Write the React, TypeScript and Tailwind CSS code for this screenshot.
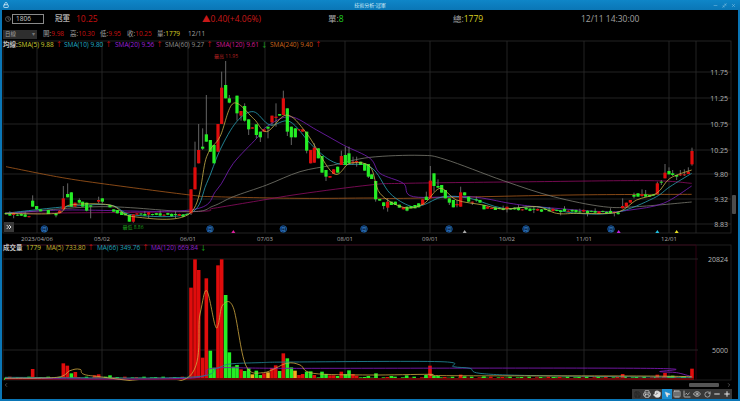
import { ChevronLeft, ChevronRight, ChevronsRight, Clock, Columns3, Eye, Hand, LineChart, Lock, Minus, Minimize2, MousePointer2, Plus, Printer, RotateCw, Save, X } from 'lucide-react';

// chart points are kept in the 3x crop space I measured from: x = z / 3, y = 50 + v / 3
type Candle = [number, number, number, number, number, number];

const R = 1110;
const RED = '#e00c0c';
const GREEN = '#25ee25';

const handCandles: Candle[] = [
  [98, 452, 470, 436, 470, 0], [110, 468, 478, 468, 478, 0], [122, 478, 484, 478, 484, 0], [145, 480, 492, 480, 492, 0],
  [168, 490, 496, 490, 502, 0], [179, 482, 490, 480, 490, 1], [190, 445, 478, 408, 478, 1], [203, 432, 442, 400, 442, 0],
  [214, 427, 470, 427, 470, 0], [225, 458, 470, 458, 470, 1], [238, 450, 458, 445, 460, 0], [248, 455, 470, 455, 470, 0],
  [260, 458, 482, 458, 484, 0], [272, 466, 470, 466, 505, 0], [296, 450, 455, 440, 460, 1], [307, 445, 455, 445, 460, 0],
  [330, 465, 472, 465, 472, 0], [341, 478, 485, 478, 485, 0], [352, 480, 490, 480, 490, 0], [365, 485, 495, 485, 495, 0],
  [376, 490, 496, 490, 496, 0], [388, 495, 515, 495, 515, 0], [400, 493, 515, 493, 518, 1], [411, 490, 494, 490, 494, 1],
  [573, 418, 490, 418, 495, 1], [585, 352, 418, 275, 418, 1], [596, 300, 340, 222, 340, 1], [608, 290, 296, 235, 300, 0],
  [619, 253, 275, 135, 275, 0], [631, 270, 305, 270, 305, 0], [642, 285, 340, 285, 340, 0], [654, 222, 305, 222, 305, 1],
  [665, 113, 222, 65, 222, 1], [677, 105, 145, 33, 145, 0], [688, 145, 158, 135, 160, 0], [711, 137, 190, 137, 212, 0],
  [723, 183, 197, 183, 212, 1], [734, 168, 212, 160, 215, 0], [746, 208, 238, 208, 255, 0], [757, 232, 236, 232, 236, 1],
  [769, 223, 255, 223, 265, 0], [781, 245, 262, 245, 276, 0], [792, 238, 245, 238, 245, 1], [804, 230, 236, 230, 265, 0],
  [816, 197, 217, 197, 228, 1], [828, 200, 204, 160, 230, 1], [839, 192, 197, 192, 197, 0], [850, 145, 195, 122, 195, 1],
  [862, 175, 245, 175, 258, 0], [874, 230, 262, 230, 285, 0], [886, 235, 262, 235, 262, 0], [897, 238, 241, 238, 241, 1],
  [908, 238, 245, 238, 245, 1], [920, 245, 302, 245, 310, 0], [932, 300, 340, 300, 340, 1], [943, 293, 338, 280, 338, 1],
  [955, 295, 325, 295, 325, 0], [966, 318, 368, 318, 368, 0], [978, 360, 380, 360, 393, 0], [990, 378, 383, 378, 383, 1],
  [1001, 358, 372, 358, 372, 1], [1013, 350, 368, 350, 368, 0], [1024, 318, 345, 302, 345, 1], [1036, 315, 345, 290, 345, 0],
  [1047, 310, 340, 290, 345, 0], [1059, 335, 339, 320, 345, 1], [1070, 333, 337, 320, 350, 1], [1082, 335, 345, 335, 345, 0],
  [1094, 340, 362, 340, 362, 0], [1105, 342, 380, 342, 384, 0],
  [R + 5, 373, 387, 373, 387, 0], [R + 17, 393, 448, 393, 455, 0], [R + 29, 447, 452, 447, 452, 0], [R + 41, 457, 468, 457, 478, 0],
  [R + 53, 455, 473, 445, 485, 1], [R + 64, 455, 465, 455, 465, 0], [R + 76, 455, 465, 455, 465, 0], [R + 88, 464, 473, 464, 473, 0],
  [R + 100, 472, 478, 472, 478, 1], [R + 111, 470, 482, 470, 484, 0], [R + 123, 468, 475, 468, 475, 0], [R + 135, 465, 475, 465, 475, 0],
  [R + 146, 460, 472, 460, 472, 0], [R + 158, 448, 465, 448, 465, 1], [R + 169, 440, 450, 425, 450, 0], [R + 181, 392, 445, 348, 445, 1],
  [R + 192, 370, 408, 370, 425, 0], [R + 204, 408, 413, 388, 413, 0], [R + 215, 405, 428, 405, 428, 0], [R + 226, 420, 445, 420, 445, 0],
  [R + 238, 445, 458, 445, 465, 0], [R + 250, 450, 472, 450, 472, 0], [R + 261, 462, 466, 450, 472, 1], [R + 272, 427, 470, 410, 470, 1],
  [R + 284, 427, 436, 427, 436, 0], [R + 296, 440, 455, 440, 455, 0], [R + 307, 455, 458, 455, 465, 1], [R + 319, 448, 451, 440, 455, 0],
  [R + 330, 450, 458, 450, 458, 0], [R + 342, 465, 478, 465, 478, 0], [R + 353, 470, 476, 470, 476, 1], [R + 365, 474, 477, 474, 477, 1],
  [R + 376, 472, 480, 472, 480, 0], [R + 758, 468, 475, 445, 475, 1], [R + 769, 458, 470, 458, 470, 1], [R + 781, 450, 458, 450, 458, 1],
  [R + 792, 435, 440, 428, 445, 0], [R + 804, 430, 440, 430, 440, 0], [R + 816, 433, 438, 418, 440, 1], [R + 827, 433, 440, 420, 440, 0],
  [R + 839, 435, 440, 435, 440, 0], [R + 850, 433, 437, 433, 437, 0], [R + 862, 400, 432, 395, 432, 1], [R + 874, 395, 398, 390, 405, 0],
  [R + 885, 368, 385, 342, 385, 1], [R + 897, 363, 373, 352, 373, 0], [R + 908, 370, 375, 360, 378, 0], [R + 920, 375, 380, 375, 390, 0],
  [R + 931, 373, 376, 360, 378, 1], [R + 943, 373, 376, 358, 378, 1], [R + 955, 365, 372, 352, 372, 1], [R + 966, 303, 343, 293, 347, 1],
];

// the quiet stretches hardly move, so fill them in from a base line instead of listing every candle
function flatCandles(from: number, to: number, startY: number, endY: number): Candle[] {
  const out: Candle[] = [];
  const count = Math.round((to - from) / 11.5);
  for (let k = 0; k <= count; k++) {
    const y = startY + ((endY - startY) * k) / Math.max(count, 1) + [0, 2, -2, 1, -1][k % 5];
    const h = 3 + (k % 3) * 2;
    out.push([from + k * 11.5, y - h / 2, y + h / 2, y - h / 2 - (k % 4 === 1 ? 8 : 1), y + h / 2 + (k % 7 === 2 ? 10 : 1), k % 4 === 2 ? 1 : 0]);
  }
  return out;
}

const candles: Candle[] = [
  ...flatCandles(18, 88, 491, 498),
  ...flatCandles(423, 562, 492, 495),
  ...flatCandles(R + 388, R + 746, 475, 488),
  ...handCandles,
];

const sma240 = [[18, 350], [170, 380], [300, 400], [570, 435], [640, 440], [900, 445], [R, 444], [R + 100, 445], [R + 600, 435], [R + 965, 433]];
const sma120 = [[15, 490], [570, 485], [640, 475], [760, 455], [900, 432], [R, 405], [R + 100, 400], [R + 500, 395], [R + 840, 392], [R + 965, 400]];
const sma60 = [[15, 492], [300, 470], [570, 485], [640, 468], [700, 440], [800, 405], [900, 365], [1000, 345], [R, 322], [R + 150, 316], [R + 225, 328], [R + 400, 392], [R + 550, 440], [R + 700, 470], [R + 800, 470], [R + 965, 456]];
const sma20 = [[15, 490], [200, 480], [570, 480], [650, 420], [700, 340], [770, 265], [800, 230], [870, 200], [950, 240], [1030, 285], [R, 325], [R + 30, 370], [R + 100, 400], [R + 130, 440], [R + 300, 440], [R + 420, 460], [R + 500, 470], [R + 700, 485], [R + 780, 480], [R + 880, 460], [R + 965, 408]];
const sma10 = [[15, 490], [200, 470], [330, 465], [400, 495], [570, 490], [620, 400], [660, 300], [710, 215], [760, 185], [810, 225], [870, 215], [940, 290], [1010, 340], [R, 350], [R + 60, 430], [R + 120, 468], [R + 160, 465], [R + 220, 440], [R + 300, 445], [R + 400, 475], [R + 500, 470], [R + 620, 490], [R + 740, 487], [R + 850, 445], [R + 900, 410], [R + 965, 370]];
const sma5 = [[15, 490], [170, 490], [210, 465], [330, 465], [400, 500], [570, 490], [620, 320], [660, 260], [700, 160], [760, 205], [800, 245], [860, 195], [920, 250], [1000, 370], [1050, 340], [R, 350], [R + 30, 430], [R + 100, 472], [R + 160, 462], [R + 210, 415], [R + 260, 450], [R + 340, 465], [R + 400, 477], [R + 500, 470], [R + 560, 490], [R + 620, 490], [R + 740, 487], [R + 800, 450], [R + 860, 430], [R + 900, 385], [R + 965, 360]];

const gridX = [37, 102, 188, 265, 345, 430, 507, 584, 669];
const dates = ['2023/04/06', '05/02', '06/01', '07/03', '08/01', '09/01', '10/02', '11/01', '12/01'];
const prices: [string, number][] = [['11.75', 72], ['11.25', 98], ['10.75', 124], ['10.25', 150], ['9.80', 174], ['9.32', 199], ['8.83', 224]];
const monthMarks = [133, 630, 850, 1092, R + 237, R + 468, R + 723];
const triangles: [number, string][] = [[700, '#e020a0'], [R + 284, '#aaaaaa'], [R + 746, '#c020e0'], [R + 862, '#20c0e0'], [R + 920, '#e8e020']];

// catmull-rom through the measured points, the averages are curves and not zigzags
function smooth(pts: number[][], base: number) {
  const p = pts.map(([z, v]) => [z / 3, base + v / 3]);
  let d = `M${p[0][0]} ${p[0][1]}`;
  for (let i = 0; i < p.length - 1; i++) {
    const a = p[Math.max(i - 1, 0)];
    const b = p[i];
    const c = p[i + 1];
    const e = p[Math.min(i + 2, p.length - 1)];
    const c1x = b[0] + (c[0] - a[0]) / 6;
    const c1y = b[1] + (c[1] - a[1]) / 6;
    const c2x = c[0] - (e[0] - b[0]) / 6;
    const c2y = c[1] - (e[1] - b[1]) / 6;
    d += ` C${c1x} ${c1y} ${c2x} ${c2y} ${c[0]} ${c[1]}`;
  }
  return d;
}

// volume: [z, top, colour] with 0 green, 1 red, 2 amber
const handBars: number[][] = [
  [98, 387, 1], [190, 370, 1], [202, 377, 1], [214, 400, 0], [226, 396, 1], [284, 406, 1], [296, 403, 1], [330, 406, 0],
  [573, 143, 1], [585, 58, 1], [596, 90, 1], [608, 353, 1], [619, 115, 1], [631, 332, 0], [642, 383, 0], [654, 76, 1],
  [665, 58, 1], [677, 165, 0], [688, 337, 0], [700, 380, 0], [711, 375, 0], [723, 388, 1], [734, 393, 0], [746, 385, 0],
  [757, 403, 2], [769, 392, 0], [781, 405, 0], [792, 400, 1], [804, 397, 2], [816, 384, 1], [827, 376, 1], [839, 393, 0],
  [850, 340, 1], [862, 355, 0], [874, 382, 0], [885, 392, 2], [897, 405, 1], [908, 402, 1], [920, 395, 0], [932, 394, 0],
  [943, 405, 1], [955, 412, 0], [966, 395, 0], [978, 402, 0], [990, 406, 1], [1001, 406, 1], [1013, 408, 0], [1024, 395, 1],
  [1036, 402, 0], [1047, 391, 0], [1059, 402, 1], [1070, 407, 1], [1082, 412, 0], [1094, 411, 0], [1105, 408, 0],
  [R + 18, 400, 0], [R + 64, 408, 0], [R + 110, 406, 0], [R + 168, 405, 0], [R + 180, 377, 1], [R + 192, 408, 0], [R + 204, 408, 0],
  [R + 272, 404, 1], [R + 284, 409, 0], [R + 342, 409, 0], [R + 550, 411, 0], [R + 758, 402, 1], [R + 862, 404, 1], [R + 885, 399, 1],
  [R + 897, 408, 0], [R + 908, 407, 0], [R + 943, 409, 0], [R + 966, 386, 1],
];

function flatBars(from: number, to: number): number[][] {
  const out: number[][] = [];
  const count = Math.round((to - from) / 11.5);
  for (let k = 0; k <= count; k++) {
    out.push([from + k * 11.5, 410 + [3, 0, 4, 2, 1][k % 5], k % 3 === 1 ? 1 : 0]);
  }
  return out;
}

const bars = [...flatBars(18, 562), ...flatBars(R + 6, R + 955), ...handBars];

const volMa5 = [[15, 415], [170, 412], [210, 392], [240, 388], [280, 408], [560, 415], [600, 222], [620, 152], [645, 255], [655, 253], [668, 195], [700, 203], [737, 375], [790, 398], [860, 370], [900, 375], [940, 400], [R, 405], [R + 180, 403], [R + 230, 407], [R + 800, 408], [R + 965, 410]];
const volMa66 = [[15, 412], [560, 412], [650, 385], [690, 372], [780, 368], [880, 366], [R + 210, 365], [R + 250, 380], [R + 300, 385], [R + 330, 400], [R + 500, 407], [R + 965, 412]];
const volMa120 = [[15, 415], [560, 415], [640, 385], [890, 385], [R + 830, 385], [R + 870, 395], [R + 920, 398], [R + 965, 410]];

const barColor = ['#25ee25', '#e00c0c', '#f2b01e'];

function MainChart() {
  return (
    <svg viewBox="2 40 730 203" className="block h-[203px] w-[730px]">
      {prices.map(([, y]) => (
        <line key={y} x1={3} x2={731} y1={y} y2={y} stroke="#2c2c2c" strokeWidth={0.8} />
      ))}
      {gridX.map((x) => (
        <line key={x} x1={x} x2={x} y1={41} y2={233} stroke="#2c2c2c" strokeWidth={0.8} />
      ))}
      <line x1={696} x2={696} y1={41} y2={233} stroke="#2c2c2c" strokeWidth={0.8} />
      <rect x={3} y={41} width={728} height={192} fill="none" stroke="#2c2c2c" strokeWidth={0.8} />
      {[
        [sma240, '#a85a1c'],
        [sma120, '#8f0d63'],
        [sma60, '#7a7a70'],
        [sma20, '#7a20ba'],
        [sma10, '#2a9fb4'],
      ].map(([pts, color]) => (
        <path key={color as string} d={smooth(pts as number[][], 50)} fill="none" stroke={color as string} strokeWidth={0.8} />
      ))}
      {candles.map(([z, t, b, wt, wb, red]) => (
        <g key={z}>
          <line x1={z / 3} x2={z / 3} y1={50 + wt / 3} y2={50 + wb / 3} stroke="#7d7d7d" strokeWidth={0.8} />
          <rect x={z / 3 - 1.6} y={50 + t / 3} width={3.2} height={(b - t) / 3} fill={red ? RED : GREEN} />
        </g>
      ))}
      <path d={smooth(sma5, 50)} fill="none" stroke="#c9b04a" strokeWidth={0.8} />
      {monthMarks.map((z) => (
        <g key={z}>
          <circle cx={z / 3} cy={229} r={3.3} fill="#0b2a50" stroke="#1c5fa8" strokeWidth={0.8} />
          <text x={z / 3} y={231} textAnchor="middle" fontSize={5} fill="#3f8fdc">月</text>
        </g>
      ))}
      {triangles.map(([z, color]) => (
        <polygon key={z} points={`${z / 3 - 2},233 ${z / 3 + 2},233 ${z / 3},230`} fill={color} />
      ))}
      <text x={226} y={58} textAnchor="middle" fontSize={5} fill="#b02020">最高 11.95</text>
      <text x={133} y={229} textAnchor="middle" fontSize={5} fill="#1f9a1f">最低 8.86</text>
      {prices.map(([label, y]) => (
        <text key={label} x={728} y={y + 2.5} textAnchor="end" fontSize={7} fill="#b4b4b4">{label}</text>
      ))}
      {dates.map((d, i) => (
        <text key={d} x={gridX[i]} y={240.5} textAnchor="middle" fontSize={6} fill="#a8a8a8">{d}</text>
      ))}
    </svg>
  );
}

function VolumeChart() {
  return (
    <svg viewBox="2 243 730 138" className="block h-[138px] w-[730px]">
      <rect x={3} y={245} width={728} height={135} fill="none" stroke="#262626" strokeWidth={0.8} />
      <line x1={3} x2={696} y1={245} y2={245} stroke="#3a0018" strokeWidth={0.8} />
      <line x1={696} x2={696} y1={245} y2={380} stroke="#3a0018" strokeWidth={0.8} />
      <line x1={3} x2={698} y1={259} y2={259} stroke="#2c2c2c" strokeWidth={0.8} />
      <line x1={3} x2={698} y1={350} y2={350} stroke="#2c2c2c" strokeWidth={0.8} />
      {gridX.map((x) => (
        <line key={x} x1={x} x2={x} y1={245} y2={380} stroke="#2c2c2c" strokeWidth={0.8} />
      ))}
      {bars.map(([z, top, c]) => (
        <rect key={z} x={z / 3 - 1.8} y={240 + top / 3} width={3.6} height={(420 - top) / 3} fill={barColor[c]} />
      ))}
      <rect x={5} y={378} width={689} height={2} fill="#6a0808" />
      <path d={smooth(volMa120, 240)} fill="none" stroke="#7a1ab0" strokeWidth={0.9} />
      <path d={smooth(volMa66, 240)} fill="none" stroke="#1f8090" strokeWidth={0.9} />
      <path d={smooth(volMa5, 240)} fill="none" stroke="#d0a840" strokeWidth={0.8} />
      <text x={728} y={261.5} textAnchor="end" fontSize={7} fill="#b4b4b4">20824</text>
      <text x={728} y={352.5} textAnchor="end" fontSize={7} fill="#b4b4b4">5000</text>
    </svg>
  );
}

function Legend({ color, text, arrow, width }: { color: string; text: string; arrow: 'up' | 'down'; width: string }) {
  return (
    <span className={`flex shrink-0 items-center gap-[2px] ${width}`}>
      <span className={color}>{text}</span>
      <span className={arrow === 'up' ? 'text-[#e01010]' : 'text-[#20c020]'}>{arrow === 'up' ? '↑' : '↓'}</span>
    </span>
  );
}

function ToolButton({ children, active, dim }: { children: React.ReactNode; active?: boolean; dim?: boolean }) {
  return (
    <div className={`flex h-[10px] w-[10px] items-center justify-center ${active ? 'bg-[#1c8ed0]' : 'bg-[#383838]'} ${dim ? 'text-[#1c1c1c]' : 'text-[#e4e4e4]'}`}>
      {children}
    </div>
  );
}

export default function App() {
  return (
    <div className="flex h-[401px] w-[740px] flex-col overflow-hidden bg-[#0a76b6] [font-family:'Open_Sans','Noto_Sans_CJK_TC',sans-serif]">
      {/* title bar */}
      <div className="relative flex h-[10px] shrink-0 items-center justify-between bg-gradient-to-b from-[#0f86c8] to-[#0a76b6] px-[3px] text-[#d5ecf8]">
        <Lock size={6} strokeWidth={3} />
        <span className="absolute left-0 right-0 text-center text-[5px] leading-none">技術分析-冠軍</span>
        <div className="flex items-center gap-[4px] pr-[1px] text-[#9fd0ec]">
          <Minus size={5} />
          <Minimize2 size={5} />
          <X size={5} />
        </div>
      </div>

      <div className="mx-[2px] flex min-h-0 flex-1 flex-col bg-black">
        {/* quote row */}
        <div className="flex h-[18px] shrink-0 items-center text-[8.5px] text-[#a8a8a8]">
          <Clock size={6} className="ml-[3px] text-[#9a9a9a]" />
          <div className="ml-[1px] flex h-[10px] w-[32px] items-center border border-[#8a8a8a] pl-[3px] text-[6.5px] text-[#c8c8c8]">1806</div>
          <span className="ml-[11px] w-[21px] text-[7.5px] font-bold text-[#a8a8a8]">冠軍</span>
          <span className="w-[126px] text-[#c81010]">10.25</span>
          <span className="w-[126px] text-[#c81818]">▲0.40(+4.06%)</span>
          <span className="w-[125px]">單:<span className="text-[#20d020]">8</span></span>
          <span className="w-[128px]">總:<span className="text-[#d8d020]">1779</span></span>
          <span className="text-[#a0a0a0]">12/11 14:30:00</span>
        </div>

        {/* ohlc row */}
        <div className="flex h-[12px] shrink-0 items-center text-[6.5px] text-[#a0a0a0]">
          <div className="ml-[1px] flex h-[9px] w-[34px] items-center justify-between bg-[#2e2e2e] px-[2px] text-[5.5px]">
            <span>日線</span>
            <span className="text-[#777777]">▾</span>
          </div>
          <span className="ml-[6px] w-[27px]">開:<span className="text-[#c81010]">9.98</span></span>
          <span className="w-[30px]">高:<span className="text-[#c81010]">10.30</span></span>
          <span className="w-[27px]">低:<span className="text-[#c81010]">9.95</span></span>
          <span className="w-[30px]">收:<span className="text-[#c81010]">10.25</span></span>
          <span className="w-[31px]">量:<span className="text-[#d8d020]">1779</span></span>
          <span>12/11</span>
        </div>

        <div className="flex min-h-0 flex-1">
          <div className="relative w-[730px] shrink-0">
            <MainChart />
            <VolumeChart />

            {/* legends sit on top of the chart panels */}
            <div className="absolute left-[1px] top-[1px] flex h-[9px] items-center text-[6.5px] leading-none">
              <span className="w-[15px] font-bold text-[#c0c0c0]">均線:</span>
              <Legend color="text-[#c8c830]" text="SMA(5) 9.88" arrow="up" width="w-[46px]" />
              <Legend color="text-[#20a8c0]" text="SMA(10) 9.80" arrow="up" width="w-[51px]" />
              <Legend color="text-[#9a20d8]" text="SMA(20) 9.56" arrow="up" width="w-[50px]" />
              <Legend color="text-[#8c8c8c]" text="SMA(60) 9.27" arrow="up" width="w-[51px]" />
              <Legend color="text-[#d01890]" text="SMA(120) 9.61" arrow="down" width="w-[54px]" />
              <Legend color="text-[#c8641c]" text="SMA(240) 9.40" arrow="up" width="w-[54px]" />
            </div>
            <div className="absolute left-[1px] top-[204px] flex h-[9px] items-center text-[6.5px] leading-none">
              <span className="w-[23px] font-bold text-[#c0c0c0]">成交量</span>
              <span className="w-[20px] text-[#c8c830]">1779</span>
              <Legend color="text-[#c8b030]" text="MA(5) 733.80" arrow="up" width="w-[51px]" />
              <Legend color="text-[#20a0b8]" text="MA(66) 349.76" arrow="up" width="w-[54px]" />
              <Legend color="text-[#8c20c8]" text="MA(120) 669.84" arrow="down" width="w-[60px]" />
            </div>
            <div className="absolute left-[2px] top-[182px] flex h-[10px] w-[10px] items-center justify-center bg-[#3a3a3a] text-[#e0e0e0]">
              <ChevronsRight size={8} strokeWidth={3} />
            </div>
          </div>

          {/* right scroll strip */}
          <div className="flex w-[6px] shrink-0 flex-col pt-[155px]">
            <div className="h-[19px] w-[4px] rounded-[1px] bg-[#4c4c4c]" />
          </div>
        </div>

        {/* range scroller and tools */}
        <div className="flex h-[18px] shrink-0 flex-col pr-[6px]">
          <div className="flex h-[8px] items-center justify-between text-[#8c8c8c]">
            <ChevronLeft size={6} className="ml-[1px]" />
            <div className="flex items-center gap-[7px]">
              <div className="h-[3.5px] w-[30px] rounded-[1px] bg-[#555555]" />
              <ChevronRight size={6} />
            </div>
          </div>
          <div className="flex justify-end">
            <ToolButton dim><Save size={7} /></ToolButton>
            <ToolButton><Printer size={8} /></ToolButton>
            <ToolButton><Hand size={8} fill="#e4e4e4" /></ToolButton>
            <ToolButton active><MousePointer2 size={7} fill="#e4e4e4" /></ToolButton>
            <ToolButton><Columns3 size={8} /></ToolButton>
            <ToolButton><LineChart size={8} /></ToolButton>
            <ToolButton><Eye size={8} /></ToolButton>
            <ToolButton><RotateCw size={7} /></ToolButton>
            <ToolButton><Minus size={8} strokeWidth={3} /></ToolButton>
            <ToolButton><Plus size={8} strokeWidth={3} /></ToolButton>
          </div>
        </div>
      </div>
      <div className="h-[2px] shrink-0" />
    </div>
  );
}
